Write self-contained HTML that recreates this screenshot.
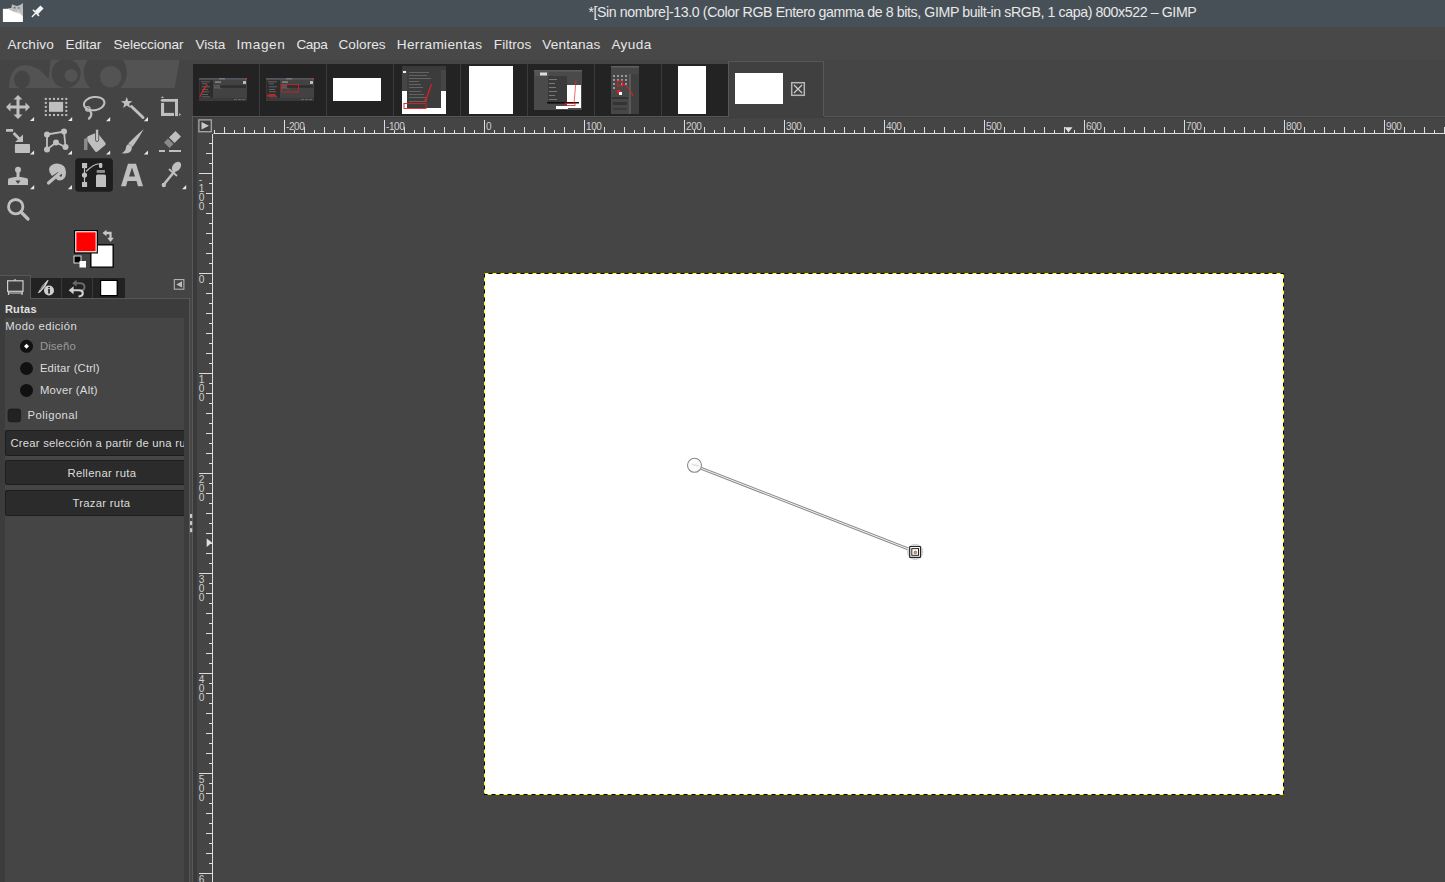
<!DOCTYPE html>
<html><head><meta charset="utf-8">
<style>
*{margin:0;padding:0;box-sizing:border-box}
html,body{width:1445px;height:882px;overflow:hidden;background:#454545;font-family:"Liberation Sans",sans-serif;color:#dcdcdc}
div,svg{position:absolute}
.t{white-space:nowrap;line-height:1}
.rl{font-size:10px;color:#cfcfcf;letter-spacing:-0.4px}
.rv{font-size:10.2px;line-height:9.2px;color:#cfcfcf;white-space:normal}
</style></head><body>

<div style="left:0;top:0;width:1445px;height:27px;background:#475057"></div>
<svg style="left:0;top:0" width="50" height="27" viewBox="0 0 50 27">
<path d="M2.9 8.8 L8 8.8 L22.9 8.8 L22.9 22 L2.9 22 Z" fill="#ffffff"/>
<path d="M7.8 8.6 Q9.5 7.6 11.4 8 L12 4.2 Q14 5.6 17 5.9 Q20.2 5.4 22.9 3 L22.9 16.3 Q20.5 13.6 17.5 12.8 Q13.5 12 11 10.6 Q9 9.8 7.8 8.6 Z" fill="#bcbcbc"/>
<ellipse cx="14.6" cy="7.8" rx="1" ry="1" fill="#6a6a6a"/>
<ellipse cx="18.8" cy="7.9" rx="1.3" ry="0.9" fill="#8a8a8a"/>
<path d="M17 11 Q19.5 12 21 14" stroke="#e8e8e8" stroke-width="0.9" fill="none"/>
<path d="M36.4 12.6 L42 7" stroke="#f6f6f6" stroke-width="4.4"/>
<path d="M33.4 10.3 L38.6 15.5" stroke="#f6f6f6" stroke-width="1.6" stroke-linecap="round"/>
<path d="M35.6 13.2 L32.3 16.6" stroke="#f6f6f6" stroke-width="1.4" stroke-linecap="round"/>
</svg>
<div style="left:0;top:27px;width:1445px;height:33px;background:#484848"></div>
<div style="left:0;top:60px;width:193px;height:822px;background:#444444"></div>
<svg style="left:0;top:58px" width="193" height="34" viewBox="0 58 193 34">
<path d="M50.6 60 L179.5 60 L174.7 88.2 L8.8 88.2 Q9.5 66 25 65 Q37 64.8 48.6 79 Z" fill="#535353"/>

<ellipse cx="22" cy="79.5" rx="8" ry="9" fill="#444444"/>
<circle cx="66.1" cy="73.5" r="14.5" fill="#444444"/>
<circle cx="71.1" cy="75.5" r="6.5" fill="#535353"/>
<circle cx="105.3" cy="72.5" r="21.6" fill="#444444"/>
<circle cx="110.7" cy="76.6" r="10.7" fill="#535353"/>
<rect x="0" y="58" width="193" height="2" fill="#484848"/>
<rect x="0" y="88.2" width="193" height="5" fill="#444444"/>
</svg>
<svg style="left:0;top:0" width="193" height="230" viewBox="0 0 193 230">
<rect x="75.2" y="158.2" width="37.7" height="33.6" rx="3.5" fill="#1e1e1e"/>
<g fill="#bfbfbf" stroke="none">
<!-- move -->
<path d="M18 95 L22.5 99.5 L19.5 99.5 L19.5 105.5 L25.5 105.5 L25.5 102.5 L30 107 L25.5 111.5 L25.5 108.5 L19.5 108.5 L19.5 114.5 L22.5 114.5 L18 119 L13.5 114.5 L16.5 114.5 L16.5 108.5 L10.5 108.5 L10.5 111.5 L6 107 L10.5 102.5 L10.5 105.5 L16.5 105.5 L16.5 99.5 L13.5 99.5 Z"/>
<!-- rect select -->
<rect x="49" y="101.9" width="14.1" height="9.9"/>
<rect x="44.8" y="97.9" width="2" height="2"/><rect x="44.8" y="114" width="2" height="2"/><rect x="48.9" y="97.9" width="2" height="2"/><rect x="48.9" y="114" width="2" height="2"/><rect x="53.0" y="97.9" width="2" height="2"/><rect x="53.0" y="114" width="2" height="2"/><rect x="57.1" y="97.9" width="2" height="2"/><rect x="57.1" y="114" width="2" height="2"/><rect x="61.2" y="97.9" width="2" height="2"/><rect x="61.2" y="114" width="2" height="2"/><rect x="65.3" y="97.9" width="2" height="2"/><rect x="65.3" y="114" width="2" height="2"/><rect x="44.8" y="101.9" width="2" height="2"/><rect x="65.3" y="101.9" width="2" height="2"/><rect x="44.8" y="105.9" width="2" height="2"/><rect x="65.3" y="105.9" width="2" height="2"/><rect x="44.8" y="109.9" width="2" height="2"/><rect x="65.3" y="109.9" width="2" height="2"/>
</g>
<g fill="none" stroke="#bfbfbf" stroke-linecap="round">
<!-- lasso -->
<ellipse cx="94.2" cy="103.6" rx="10.3" ry="6.6" stroke-width="2" transform="rotate(-8 94.2 103.6)"/>
<path d="M89.5 110.5 Q93.5 114 89 118.6" stroke-width="2.3"/>
<circle cx="87.8" cy="108.8" r="2.2" stroke-width="1.3"/>
<!-- wand stick -->
<path d="M131.5 106.5 L143 117.5" stroke-width="3"/>
<!-- crop -->

<!-- perspective lines -->
<path d="M47 134.5 L64 131.5 L65.5 147 L56 142.5 L47 149.5 Z" stroke-width="1.8"/>
<!-- zoom -->
<circle cx="15.7" cy="206.7" r="7.2" stroke-width="2.8"/>
<path d="M21 212 L28 219" stroke-width="3.2"/>
<!-- smudge stick -->
<path d="M48.5 183 L60 173" stroke-width="3.2"/>
<!-- paths curve -->
<path d="M84.5 168 L84.5 182" stroke-width="1.2"/>
<path d="M86.5 171 Q94 164 98 164 L101 164" stroke-width="1.2"/>
<!-- picker tube -->
<path d="M174 172 L165 183" stroke-width="2.6"/>
<path d="M169.5 169.5 L176.5 175.5" stroke-width="1.8"/>
</g>
<g fill="#bfbfbf">
<!-- star -->
<path d="M126.7 97 L128.2 101 L132.4 101.2 L129.1 103.8 L130.3 108 L126.7 105.6 L123.1 108 L124.3 103.8 L121 101.2 L125.2 101 Z"/>
<!-- crop -->
<path d="M160.3 100.4 L161.8 98.9 L178 98.9 L178 101.8 L161.8 101.8 Z"/><rect x="175" y="98.9" width="3" height="17.2"/><rect x="161" y="102.9" width="3.1" height="13.1"/><rect x="161" y="112.9" width="13" height="3.1"/><path d="M161 98 L162.5 96.2 L164 98 Z"/>
<!-- transform -->
<rect x="6" y="128.9" width="7.1" height="2.8" rx="0.5"/>
<path d="M13.6 133 L20 139.4" stroke="#bfbfbf" stroke-width="2.8"/>
<path d="M23 134.4 L23 142 L15.2 142 Z"/>
<rect x="14.9" y="144" width="15.1" height="9.1" rx="0.8"/>
<!-- perspective nodes -->
<circle cx="47" cy="134.5" r="3"/><circle cx="64" cy="131.5" r="3"/><circle cx="56" cy="142.5" r="3"/><circle cx="65.5" cy="147" r="3"/><circle cx="47" cy="149.5" r="3"/>
<!-- bucket -->
<path d="M87 138 Q87 136.5 88.5 136 L95.5 133 Q97 132.5 98 133.5 L105.5 143 Q106.3 144.3 105 145.3 L97.5 151.5 Q96 152.5 95 151.3 L87.5 141 Z"/>
<rect x="95.5" y="129" width="3.2" height="12.5" rx="1.6" fill="#bfbfbf" stroke="#444" stroke-width="0.8"/>
<path d="M84 139 L87.5 137.5 L87.5 150 L84 150 Z" fill="#8a8a8a"/>
<!-- brush -->
<path d="M143.8 129 Q139 138 132.6 146.8 L128.3 143.6 Q136 135.5 143.8 129 Z"/>
<path d="M132 146.5 Q132 153.5 125 153.5 L121.5 153.2 Q125.5 151.5 125.8 148 Q126.5 144 129 144.2 Z"/>
<!-- eraser -->
<path d="M175.5 131 L181 136.5 L174.5 143 L169 137.5 Z"/>
<path d="M168 138.5 L173.5 144 L169.5 148 L164 142.5 Z" fill="#8a8a8a"/>
<rect x="159" y="150" width="6" height="2"/><rect x="169" y="150" width="12" height="2"/>
<!-- clone -->
<circle cx="18" cy="169.7" r="3"/>
<rect x="16.5" y="171" width="3" height="6"/>
<path d="M8 185 L8 180 Q8 178 10 178 L15 177 L21 177 L26 178 Q28 178 28 180 L28 185 Z"/>
<path d="M15.5 180.5 L20.5 180.5 L18 184 Z" fill="#444"/>
<!-- smudge blob -->
<path d="M49 169 Q50 164 57 163.5 Q66 164 66 172 Q66 180 60 180.5 Q56 180.5 56 177.5 L59 175 Q60 178 62 176 Q62 172 58 172 L52 176 Q50 173 49.5 172 Z"/>
<!-- paths icon -->
<rect x="82" y="163" width="5.1" height="5.1"/>
<circle cx="84.5" cy="175" r="2.6"/>
<rect x="82" y="182" width="5.1" height="5"/>
<rect x="99" y="163" width="3.3" height="5" rx="1.2"/>
<rect x="96.7" y="170" width="8.2" height="2.9" fill="#8f8f8f"/>
<path d="M96 176 Q96 174.5 97.5 174.5 L104.5 174.5 Q106 174.5 106 176 L106 187 L96 187 Z"/>
<!-- text A -->
<path d="M121 186.2 L128 163.8 L136 163.8 L143 186.2 L138 186.2 L136.5 181 L127.5 181 L126 186.2 Z M129 176.5 L135 176.5 L132 167.5 Z" fill-rule="evenodd"/>
<!-- picker -->
<ellipse cx="176.5" cy="166.8" rx="3.8" ry="5.6" transform="rotate(40 176.5 166.8)"/>
<circle cx="163.8" cy="185" r="2.2"/>
</g>
<path d="M34.1 116.89999999999999 L34.1 121.1 L29.900000000000002 121.1 Z" fill="#e8e8e8"/><path d="M72.2 116.89999999999999 L72.2 121.1 L68.0 121.1 Z" fill="#e8e8e8"/><path d="M110.2 117.0 L110.2 121.2 L106.0 121.2 Z" fill="#e8e8e8"/><path d="M148 117.0 L148 121.2 L143.8 121.2 Z" fill="#e8e8e8"/><path d="M34.1 150.4 L34.1 154.6 L29.900000000000002 154.6 Z" fill="#e8e8e8"/><path d="M72 150.4 L72 154.6 L67.8 154.6 Z" fill="#e8e8e8"/><path d="M110.2 150.4 L110.2 154.6 L106.0 154.6 Z" fill="#e8e8e8"/><path d="M148 150.4 L148 154.6 L143.8 154.6 Z" fill="#e8e8e8"/><path d="M34.2 185.0 L34.2 189.2 L30.000000000000004 189.2 Z" fill="#e8e8e8"/><path d="M72 185.0 L72 189.2 L67.8 189.2 Z" fill="#e8e8e8"/><path d="M186.2 185.0 L186.2 189.2 L182.0 189.2 Z" fill="#e8e8e8"/><path d="M179.2 113 L181 114.6 L179.2 116.2 Z" fill="#bbb"/></svg>
<svg style="left:0;top:220px" width="193" height="55" viewBox="0 220 193 55">
<rect x="90.2" y="244.2" width="23.6" height="23.5" fill="#000"/>
<rect x="91.5" y="245.5" width="21" height="21" fill="#fff"/>
<rect x="74" y="230" width="23.9" height="23.5" fill="#000"/>
<rect x="75.2" y="231.2" width="21.5" height="21.1" fill="#fff"/>
<rect x="76.3" y="232.3" width="19.3" height="18.9" fill="#ff0000"/>
<rect x="74" y="256" width="7" height="7" fill="#000" stroke="#ddd" stroke-width="1"/>
<rect x="79.5" y="261" width="6.5" height="6.5" fill="#fff"/>
<path d="M102.5 233 L106.5 229.8 L106.5 231.8 L111.6 231.8 L111.6 237.8 L113.8 237.8 L110.5 242 L107.2 237.8 L109.4 237.8 L109.4 234.2 L106.5 234.2 L106.5 236.2 Z" fill="#c8c8c8"/>
</svg>
<div style="left:31px;top:277.5px;width:94px;height:20.5px;background:#222222"></div>
<div style="left:61px;top:277.5px;width:1px;height:20.5px;background:#3a3a3a"></div>
<div style="left:92px;top:277.5px;width:1px;height:20.5px;background:#3a3a3a"></div>
<div style="left:0;top:275px;width:31px;height:24px;background:#3e3e3e;border-top:1px solid #555;border-right:1px solid #555"></div>
<svg style="left:0;top:270px" width="193" height="30" viewBox="0 270 193 30">
<g fill="none" stroke="#cfcfcf" stroke-width="1.2">
<rect x="7.6" y="280.8" width="15.4" height="10.5"/>
<path d="M8.5 291.5 L8.5 295 M22 291.5 L22 295 M8 293 L23 293"/>
</g>
<path d="M13.5 280.5 L15 278.8 L16.5 280.5 Z" fill="#cfcfcf"/>
<path d="M37.6 293.2 L42 286 L47.8 279.8 L48.6 280.6 L45.5 286.5 L40 292.5 Z" fill="#cfcfcf"/><path d="M40 290 L44.5 284.5" stroke="#333" stroke-width="0.7"/>
<circle cx="49" cy="290.5" r="5" fill="#cfcfcf"/>
<rect x="48.2" y="289" width="1.7" height="4.5" fill="#222"/><rect x="48.2" y="287" width="1.7" height="1.2" fill="#222"/>
<path d="M75.5 283.3 L80.5 283.3 Q84.5 283.5 84.5 287 Q84.5 290 81.5 290.5" fill="none" stroke="#6a6a6a" stroke-width="2"/>
<path d="M72.2 283.3 L76.5 279.8 L76.5 286.8 Z" fill="#6a6a6a"/>
<path d="M72.5 290.2 L79 290.2 Q82.8 290.3 82.8 293.2 Q82.8 296 78.5 296.5" fill="none" stroke="#d0d0d0" stroke-width="2.1"/>
<path d="M68.6 290.2 L73.6 286.2 L73.6 294.2 Z" fill="#d0d0d0"/>
<rect x="100" y="279.8" width="17.8" height="16.4" fill="#000"/>
<rect x="101.2" y="281" width="15.4" height="14" fill="#fff"/>
<rect x="174.3" y="279.6" width="9.6" height="9.6" fill="none" stroke="#bdbdbd" stroke-width="1"/>
<path d="M176.3 284.4 L182 281.2 L182 287.6 Z" fill="#bdbdbd"/>
</svg>
<div style="left:0;top:297.6px;width:190px;height:585px;background:#3c3c3c;border-top:1px solid #575757"></div>
<div style="left:189px;top:297.6px;width:1px;height:585px;background:#575757"></div>
<div style="left:0;top:297.4px;width:30.4px;height:1.4px;background:#3d3d3d"></div>
<div style="left:5px;top:318px;width:179px;height:564px;background:#454545"></div>
<div style="left:190px;top:298px;width:2.3px;height:584px;background:#464646"></div>
<div style="left:192.3px;top:116px;width:0.8px;height:766px;background:#585858"></div>
<svg style="left:188px;top:510px" width="6" height="26"><rect x="2" y="4" width="2.2" height="4" fill="#c8c8c8"/><rect x="2" y="11.1" width="2.2" height="4" fill="#c8c8c8"/><rect x="2" y="18.2" width="2.2" height="4" fill="#c8c8c8"/></svg>
<svg style="left:0;top:330px" width="190" height="100" viewBox="0 330 190 100">
<circle cx="26.5" cy="346.3" r="6.5" fill="#111"/>
<path d="M26.5 343.8 L29 346.3 L26.5 348.8 L24 346.3 Z" fill="#fff"/>
<circle cx="26.5" cy="368.5" r="6.5" fill="#111"/>
<circle cx="26.5" cy="390.4" r="6.5" fill="#111"/>
<rect x="8.1" y="409.1" width="12.5" height="12.7" rx="2.2" fill="#222" stroke="#1a1a1a" stroke-width="0.8"/>
</svg>
<div style="left:5.3px;top:430.2px;width:178.7px;height:25.6px;background:#2b2b2b;border:1px solid #1e1e1e;border-right:none;border-radius:2.5px 0 0 2.5px"></div>
<div style="left:5.3px;top:460.2px;width:178.7px;height:25.3px;background:#2b2b2b;border:1px solid #1e1e1e;border-right:none;border-radius:2.5px 0 0 2.5px"></div>
<div style="left:5.3px;top:490.3px;width:178.7px;height:25.5px;background:#2b2b2b;border:1px solid #1e1e1e;border-right:none;border-radius:2.5px 0 0 2.5px"></div>
<div style="left:5.3px;top:430px;width:178.7px;height:26px;overflow:hidden"><div class="t" style="left:5.1px;top:8.23px;font-size:11.3px;color:#dcdcdc;letter-spacing:0.225px">Crear selección a partir de una ruta</div></div>
<div style="left:193px;top:60px;width:1252px;height:57px;background:#454545"></div>
<div style="left:193px;top:63.7px;width:630px;height:52.3px;background:#232323"></div>
<div style="left:259.2px;top:63.7px;width:1px;height:52.3px;background:#3b3b3b"></div>
<div style="left:326.1px;top:63.7px;width:1px;height:52.3px;background:#3b3b3b"></div>
<div style="left:392.9px;top:63.7px;width:1px;height:52.3px;background:#3b3b3b"></div>
<div style="left:459.9px;top:63.7px;width:1px;height:52.3px;background:#3b3b3b"></div>
<div style="left:527.0px;top:63.7px;width:1px;height:52.3px;background:#3b3b3b"></div>
<div style="left:594.0px;top:63.7px;width:1px;height:52.3px;background:#3b3b3b"></div>
<div style="left:660.9px;top:63.7px;width:1px;height:52.3px;background:#3b3b3b"></div>
<div style="left:728.4px;top:61px;width:96px;height:55px;background:#404040;border:1px solid #585858;border-bottom:none"></div>
<div style="left:193px;top:115.8px;width:1252px;height:1.4px;background:#575757"></div>
<div style="left:193px;top:117.2px;width:1252px;height:1px;background:#3d3d3d"></div>
<div style="left:728.9px;top:115.5px;width:95px;height:1.5px;background:#404040"></div>
<div style="left:332.8px;top:77.6px;width:48.4px;height:23.6px;background:#fff"></div>
<div style="left:468.7px;top:65.9px;width:44.4px;height:48.4px;background:#fff"></div>
<div style="left:677.7px;top:65.5px;width:28.6px;height:48.6px;background:#fff"></div>
<div style="left:734.7px;top:72.6px;width:48.5px;height:31.6px;background:#fff"></div>
<svg style="left:198.8px;top:77.9px" width="48.2" height="23.1" viewBox="0 0 48.2 23.1">
<rect width="48.2" height="23.1" fill="#424242"/>
<rect width="48.2" height="1.7" fill="#50565d"/>
<rect x="20" y="0.3" width="6" height="1" fill="#8a8a8a"/>
<rect x="46" y="0.2" width="2" height="1.4" fill="#d03030"/>
<rect x="0.5" y="2.2" width="13.5" height="17.5" fill="#2c2c2c"/>
<g fill="#777"><rect x="2" y="3.5" width="9" height="0.7"/><rect x="3" y="5.5" width="5" height="0.7"/><rect x="3" y="8.5" width="8" height="0.7"/><rect x="3" y="11" width="6" height="0.7"/><rect x="3" y="13.5" width="7" height="0.7"/><rect x="3" y="16" width="6" height="0.7"/><rect x="3" y="18.5" width="8" height="0.7"/></g>
<rect x="16" y="3.5" width="6" height="1.2" fill="#9a9a9a"/>
<rect x="44" y="3" width="3" height="3" fill="#bbb"/>
<rect x="15" y="7.5" width="8" height="0.8" fill="#777"/><rect x="15" y="9.5" width="8" height="0.8" fill="#777"/>
<rect x="21" y="7.2" width="26" height="2.6" fill="#2e2e2e"/>
<rect x="0" y="20" width="48.2" height="3.1" fill="#3a3a3a"/>
<g fill="#666"><rect x="35" y="21" width="3" height="1"/><rect x="39" y="21" width="3" height="1"/><rect x="43" y="21" width="3" height="1"/></g>
<path d="M1 19 Q4 11 8.5 6.5" stroke="#dd2222" stroke-width="1.1" fill="none"/>
</svg>
<svg style="left:266px;top:77.9px" width="48.2" height="23.1" viewBox="0 0 48.2 23.1">
<rect width="48.2" height="23.1" fill="#424242"/>
<rect width="48.2" height="1.7" fill="#50565d"/>
<rect x="20" y="0.3" width="6" height="1" fill="#8a8a8a"/>
<rect x="46" y="0.2" width="2" height="1.4" fill="#d03030"/>
<rect x="0.5" y="2.2" width="13.5" height="17.5" fill="#2c2c2c"/>
<g fill="#777"><rect x="2" y="3.5" width="9" height="0.7"/><rect x="3" y="5.5" width="5" height="0.7"/><rect x="3" y="8.5" width="8" height="0.7"/><rect x="3" y="11" width="6" height="0.7"/><rect x="3" y="13.5" width="7" height="0.7"/><rect x="3" y="16" width="6" height="0.7"/><rect x="3" y="18.5" width="8" height="0.7"/></g>
<rect x="16" y="3.5" width="6" height="1.2" fill="#9a9a9a"/>
<rect x="44" y="3" width="3" height="3" fill="#bbb"/>
<rect x="15" y="7.5" width="8" height="0.8" fill="#777"/><rect x="15" y="9.5" width="8" height="0.8" fill="#777"/>
<rect x="21" y="7.2" width="26" height="2.6" fill="#2e2e2e"/>
<rect x="0" y="20" width="48.2" height="3.1" fill="#3a3a3a"/>
<g fill="#666"><rect x="35" y="21" width="3" height="1"/><rect x="39" y="21" width="3" height="1"/><rect x="43" y="21" width="3" height="1"/></g>
<rect x="15.5" y="6.5" width="17" height="7.5" fill="none" stroke="#d02020" stroke-width="0.9"/><rect x="1" y="16.5" width="9" height="2.3" fill="#c02020"/>
</svg>
<svg style="left:402px;top:65.9px" width="44" height="48.4" viewBox="0 0 44 48.4">
<rect width="44" height="48.4" fill="#ffffff"/>
<rect width="44" height="25" fill="#454545"/>
<rect x="0" y="0" width="44" height="4" fill="#3a3a3a"/>
<rect x="5" y="3" width="34" height="39" fill="#3c3c3c"/>
<rect x="1" y="5" width="3" height="2" fill="#eee"/>
<g fill="#6e6e6e"><rect x="7" y="6" width="20" height="0.8"/><rect x="7" y="9" width="18" height="0.8"/><rect x="7" y="12" width="22" height="0.8"/><rect x="7" y="15" width="10" height="0.8"/><rect x="7" y="18" width="12" height="0.8"/><rect x="7" y="21" width="14" height="0.8"/><rect x="7" y="25" width="12" height="0.8"/><rect x="7" y="28" width="15" height="0.8"/><rect x="7" y="31" width="18" height="0.8"/><rect x="7" y="35" width="18" height="0.8"/></g>
<path d="M29.5 18 L23.5 35" stroke="#e02020" stroke-width="1.2"/>
<path d="M22 33 L23.5 36 L25.5 33.5 Z" fill="#e02020"/>
<rect x="2" y="37.5" width="22" height="5" fill="none" stroke="#e02020" stroke-width="0.9"/>
</svg>
<svg style="left:533.9px;top:69.9px" width="48.1" height="40.3" viewBox="0 0 48.1 40.3">
<rect width="48.1" height="40.3" fill="#4a4a4a"/>
<rect width="48.1" height="1.5" fill="#5a5f66"/>
<rect x="1" y="2" width="14" height="4" fill="#555"/>
<rect x="6" y="2.5" width="7" height="3" fill="#ddd"/>
<rect x="33" y="15" width="14" height="23" fill="#fff"/>
<rect x="22" y="36" width="12" height="3" fill="#fff"/>
<rect x="14" y="6" width="19" height="28" fill="#3a3a3a"/>
<g fill="#888"><rect x="15" y="9" width="8" height="0.8"/><rect x="15" y="13" width="6" height="0.8"/><rect x="15" y="17" width="7" height="0.8"/><rect x="15" y="21" width="8" height="0.8"/><rect x="15" y="25" width="6" height="0.8"/><rect x="15" y="29" width="8" height="0.8"/></g>
<rect x="13" y="32" width="32" height="1.5" fill="#111"/>
<rect x="31" y="33.5" width="10" height="2" fill="none" stroke="#d02020" stroke-width="0.8"/>
<path d="M42 10 L40 34" stroke="#e03030" stroke-width="0.7"/>
</svg>
<svg style="left:611px;top:65.5px" width="28" height="48.5" viewBox="0 0 28 48.5">
<rect width="28" height="48.5" fill="#474747"/>
<rect width="28" height="1.5" fill="#5a5f66"/>
<rect x="18" y="8" width="10" height="40" fill="#3f3f3f"/>
<rect x="18.5" y="8" width="1" height="40" fill="#777"/>
<g fill="#999"><rect x="2" y="9" width="2" height="2"/><rect x="6" y="9" width="2" height="2"/><rect x="10" y="9" width="2" height="2"/><rect x="14" y="9" width="2" height="2"/><rect x="2" y="13" width="2" height="2"/><rect x="6" y="13" width="2" height="2"/><rect x="10" y="13" width="2" height="2"/><rect x="14" y="13" width="2" height="2"/><rect x="2" y="17" width="2" height="2"/><rect x="10" y="17" width="2" height="2"/><rect x="14" y="17" width="2" height="2"/><rect x="2" y="21" width="2" height="2"/></g>
<rect x="6.5" y="15" width="5" height="5" fill="none" stroke="#e02020" stroke-width="1"/>
<path d="M11 18 Q18 20 22 30" stroke="#e02020" stroke-width="1" fill="none"/>
<rect x="6" y="24" width="3.5" height="3.5" fill="#e02020"/><rect x="8" y="26" width="3" height="3" fill="#fff"/>
<rect x="1" y="31" width="16" height="2" fill="#333"/>
<rect x="2" y="36" width="14" height="3" fill="#333"/>
<rect x="2" y="42" width="14" height="2" fill="#3a3a3a"/>
</svg>
<svg style="left:790px;top:81px" width="16" height="16" viewBox="790 81 16 16">
<rect x="791.7" y="82.7" width="12.6" height="12.6" fill="none" stroke="#b5b5b5" stroke-width="1.5"/>
<path d="M794 85 L802 93 M802 85 L794 93" stroke="#d0d0d0" stroke-width="1.2"/>
</svg>
<div style="left:193px;top:117px;width:4px;height:765px;background:#3a3a3a"></div>
<svg style="left:0;top:0" width="1445" height="882" viewBox="0 0 1445 882"><rect x="198.9" y="119.9" width="12.4" height="11.8" fill="#3e3e3e" stroke="#a8a8a8" stroke-width="1.3"/><path d="M201.5 122 L209 125.8 L201.5 129.6 Z" fill="#c8c8c8"/><rect x="213.5" y="133" width="1232" height="1" fill="#dedede"/><rect x="212" y="134" width="1" height="748" fill="#dedede"/><path d="M214.5 130 V133 M224.5 127 V133 M234.5 130 V133 M244.5 127 V133 M254.5 130 V133 M264.5 127 V133 M274.5 130 V133 M284.5 120 V133 M294.5 130 V133 M304.5 127 V133 M314.5 130 V133 M324.5 127 V133 M334.5 130 V133 M344.5 127 V133 M354.5 130 V133 M364.5 127 V133 M374.5 130 V133 M384.5 120 V133 M394.5 130 V133 M404.5 127 V133 M414.5 130 V133 M424.5 127 V133 M434.5 130 V133 M444.5 127 V133 M454.5 130 V133 M464.5 127 V133 M474.5 130 V133 M484.5 120 V133 M494.5 130 V133 M504.5 127 V133 M514.5 130 V133 M524.5 127 V133 M534.5 130 V133 M544.5 127 V133 M554.5 130 V133 M564.5 127 V133 M574.5 130 V133 M584.5 120 V133 M594.5 130 V133 M604.5 127 V133 M614.5 130 V133 M624.5 127 V133 M634.5 130 V133 M644.5 127 V133 M654.5 130 V133 M664.5 127 V133 M674.5 130 V133 M684.5 120 V133 M694.5 130 V133 M704.5 127 V133 M714.5 130 V133 M724.5 127 V133 M734.5 130 V133 M744.5 127 V133 M754.5 130 V133 M764.5 127 V133 M774.5 130 V133 M784.5 120 V133 M794.5 130 V133 M804.5 127 V133 M814.5 130 V133 M824.5 127 V133 M834.5 130 V133 M844.5 127 V133 M854.5 130 V133 M864.5 127 V133 M874.5 130 V133 M884.5 120 V133 M894.5 130 V133 M904.5 127 V133 M914.5 130 V133 M924.5 127 V133 M934.5 130 V133 M944.5 127 V133 M954.5 130 V133 M964.5 127 V133 M974.5 130 V133 M984.5 120 V133 M994.5 130 V133 M1004.5 127 V133 M1014.5 130 V133 M1024.5 127 V133 M1034.5 130 V133 M1044.5 127 V133 M1054.5 130 V133 M1064.5 127 V133 M1074.5 130 V133 M1084.5 120 V133 M1094.5 130 V133 M1104.5 127 V133 M1114.5 130 V133 M1124.5 127 V133 M1134.5 130 V133 M1144.5 127 V133 M1154.5 130 V133 M1164.5 127 V133 M1174.5 130 V133 M1184.5 120 V133 M1194.5 130 V133 M1204.5 127 V133 M1214.5 130 V133 M1224.5 127 V133 M1234.5 130 V133 M1244.5 127 V133 M1254.5 130 V133 M1264.5 127 V133 M1274.5 130 V133 M1284.5 120 V133 M1294.5 130 V133 M1304.5 127 V133 M1314.5 130 V133 M1324.5 127 V133 M1334.5 130 V133 M1344.5 127 V133 M1354.5 130 V133 M1364.5 127 V133 M1374.5 130 V133 M1384.5 120 V133 M1394.5 130 V133 M1404.5 127 V133 M1414.5 130 V133 M1424.5 127 V133 M1434.5 130 V133 M1444.5 127 V133 M209 143.5 H212 M206 153.5 H212 M209 163.5 H212 M199 173.5 H212 M209 183.5 H212 M206 193.5 H212 M209 203.5 H212 M206 213.5 H212 M209 223.5 H212 M206 233.5 H212 M209 243.5 H212 M206 253.5 H212 M209 263.5 H212 M199 273.5 H212 M209 283.5 H212 M206 293.5 H212 M209 303.5 H212 M206 313.5 H212 M209 323.5 H212 M206 333.5 H212 M209 343.5 H212 M206 353.5 H212 M209 363.5 H212 M199 373.5 H212 M209 383.5 H212 M206 393.5 H212 M209 403.5 H212 M206 413.5 H212 M209 423.5 H212 M206 433.5 H212 M209 443.5 H212 M206 453.5 H212 M209 463.5 H212 M199 473.5 H212 M209 483.5 H212 M206 493.5 H212 M209 503.5 H212 M206 513.5 H212 M209 523.5 H212 M206 533.5 H212 M209 543.5 H212 M206 553.5 H212 M209 563.5 H212 M199 573.5 H212 M209 583.5 H212 M206 593.5 H212 M209 603.5 H212 M206 613.5 H212 M209 623.5 H212 M206 633.5 H212 M209 643.5 H212 M206 653.5 H212 M209 663.5 H212 M199 673.5 H212 M209 683.5 H212 M206 693.5 H212 M209 703.5 H212 M206 713.5 H212 M209 723.5 H212 M206 733.5 H212 M209 743.5 H212 M206 753.5 H212 M209 763.5 H212 M199 773.5 H212 M209 783.5 H212 M206 793.5 H212 M209 803.5 H212 M206 813.5 H212 M209 823.5 H212 M206 833.5 H212 M209 843.5 H212 M206 853.5 H212 M209 863.5 H212 M199 873.5 H212" stroke="#dedede" stroke-width="1" fill="none"/><path d="M1064.5 127.2 L1072.5 127.2 L1068.5 132.5 Z" fill="#e0e0e0"/><path d="M206.7 538.4 L212 542.6 L206.7 546.9 Z" fill="#e0e0e0"/></svg>
<div style="left:212px;top:117px;width:1233px;height:17px;overflow:hidden"><div style="left:-212px;top:-117px;width:1445px;height:882px"><div class="t rl" style="left:286.0px;top:121.5px">-200</div><div class="t rl" style="left:386.0px;top:121.5px">-100</div><div class="t rl" style="left:486.0px;top:121.5px">0</div><div class="t rl" style="left:586.0px;top:121.5px">100</div><div class="t rl" style="left:686.0px;top:121.5px">200</div><div class="t rl" style="left:786.0px;top:121.5px">300</div><div class="t rl" style="left:886.0px;top:121.5px">400</div><div class="t rl" style="left:986.0px;top:121.5px">500</div><div class="t rl" style="left:1086.0px;top:121.5px">600</div><div class="t rl" style="left:1186.0px;top:121.5px">700</div><div class="t rl" style="left:1286.0px;top:121.5px">800</div><div class="t rl" style="left:1386.0px;top:121.5px">900</div></div></div>
<div style="left:193px;top:134px;width:19px;height:748px;overflow:hidden"><div style="left:-193px;top:-134px;width:1445px;height:882px"><div class="t rv" style="left:198.8px;top:174.6px">-<br>1<br>0<br>0</div><div class="t rv" style="left:198.8px;top:274.6px">0</div><div class="t rv" style="left:198.8px;top:374.6px">1<br>0<br>0</div><div class="t rv" style="left:198.8px;top:474.6px">2<br>0<br>0</div><div class="t rv" style="left:198.8px;top:574.6px">3<br>0<br>0</div><div class="t rv" style="left:198.8px;top:674.6px">4<br>0<br>0</div><div class="t rv" style="left:198.8px;top:774.6px">5<br>0<br>0</div><div class="t rv" style="left:198.8px;top:874.6px">6<br>0<br>0</div></div></div>
<div style="left:484px;top:273px;width:800px;height:522px;background:#fff"></div>
<svg style="left:0;top:0" width="1445" height="882" viewBox="0 0 1445 882">
<rect x="484.5" y="273.5" width="799" height="521" fill="none" stroke="#000" stroke-width="1"/>
<rect x="484.5" y="273.5" width="799" height="521" fill="none" stroke="#ffff00" stroke-width="1" stroke-dasharray="4 4"/>
<line x1="697.5" y1="466.9" x2="910" y2="549.6" stroke="#8c8c8c" stroke-width="3"/>
<line x1="697.5" y1="466.9" x2="910" y2="549.6" stroke="#f4f4f4" stroke-width="1"/>
<circle cx="694.5" cy="465.3" r="7" fill="#fbfbfb" stroke="#8a8a8a" stroke-width="1.1"/>
<path d="M692 464.5 L699 466" stroke="#e0e0e0" stroke-width="1.5"/>
<circle cx="915.2" cy="552" r="8.2" fill="#d6d6d6"/>
<rect x="909.7" y="546.5" width="10.8" height="10.9" rx="0.6" fill="#fff" stroke="#262626" stroke-width="1.2"/>
<rect x="911.8" y="548.6" width="6.7" height="6.7" fill="#fff" stroke="#262626" stroke-width="1"/>
<circle cx="915.4" cy="552.4" r="1.3" fill="#e0b020" stroke="#445" stroke-width="0.6"/>
</svg>
<div class="t" style="left:588.40px;top:5.28px;font-size:14.2px;font-weight:400;color:#e8e8e8;letter-spacing:-0.408px;">*[Sin nombre]-13.0 (Color RGB Entero gamma de 8 bits, GIMP built-in sRGB, 1 capa) 800x522 – GIMP</div>
<div class="t" style="left:7.40px;top:37.68px;font-size:13.6px;font-weight:400;color:#e6e6e6;letter-spacing:0.196px;">Archivo</div>
<div class="t" style="left:65.60px;top:37.68px;font-size:13.6px;font-weight:400;color:#e6e6e6;letter-spacing:0.047px;">Editar</div>
<div class="t" style="left:113.60px;top:37.68px;font-size:13.6px;font-weight:400;color:#e6e6e6;letter-spacing:-0.112px;">Seleccionar</div>
<div class="t" style="left:195.40px;top:37.68px;font-size:13.6px;font-weight:400;color:#e6e6e6;letter-spacing:0.003px;">Vista</div>
<div class="t" style="left:236.40px;top:37.68px;font-size:13.6px;font-weight:400;color:#e6e6e6;letter-spacing:0.609px;">Imagen</div>
<div class="t" style="left:296.40px;top:37.68px;font-size:13.6px;font-weight:400;color:#e6e6e6;letter-spacing:-0.375px;">Capa</div>
<div class="t" style="left:338.50px;top:37.68px;font-size:13.6px;font-weight:400;color:#e6e6e6;letter-spacing:0.051px;">Colores</div>
<div class="t" style="left:396.80px;top:37.68px;font-size:13.6px;font-weight:400;color:#e6e6e6;letter-spacing:0.326px;">Herramientas</div>
<div class="t" style="left:493.80px;top:37.68px;font-size:13.6px;font-weight:400;color:#e6e6e6;letter-spacing:0.083px;">Filtros</div>
<div class="t" style="left:542.20px;top:37.68px;font-size:13.6px;font-weight:400;color:#e6e6e6;letter-spacing:0.212px;">Ventanas</div>
<div class="t" style="left:611.40px;top:37.68px;font-size:13.6px;font-weight:400;color:#e6e6e6;letter-spacing:0.397px;">Ayuda</div>
<div class="t" style="left:4.90px;top:303.69px;font-size:11px;font-weight:700;color:#e2e2e2;letter-spacing:0.287px;">Rutas</div>
<div class="t" style="left:5.20px;top:321.23px;font-size:11.3px;font-weight:400;color:#dcdcdc;letter-spacing:0.391px;">Modo edición</div>
<div class="t" style="left:39.90px;top:341.23px;font-size:11.3px;font-weight:400;color:#999999;letter-spacing:0.121px;">Diseño</div>
<div class="t" style="left:39.90px;top:362.73px;font-size:11.3px;font-weight:400;color:#dcdcdc;letter-spacing:0.158px;">Editar (Ctrl)</div>
<div class="t" style="left:39.90px;top:384.73px;font-size:11.3px;font-weight:400;color:#dcdcdc;letter-spacing:0.242px;">Mover (Alt)</div>
<div class="t" style="left:27.60px;top:409.73px;font-size:11.3px;font-weight:400;color:#dcdcdc;letter-spacing:0.435px;">Poligonal</div>
<div class="t" style="left:67.40px;top:468.23px;font-size:11.3px;font-weight:400;color:#dcdcdc;letter-spacing:0.332px;">Rellenar ruta</div>
<div class="t" style="left:72.40px;top:498.23px;font-size:11.3px;font-weight:400;color:#dcdcdc;letter-spacing:0.288px;">Trazar ruta</div>
</body></html>
